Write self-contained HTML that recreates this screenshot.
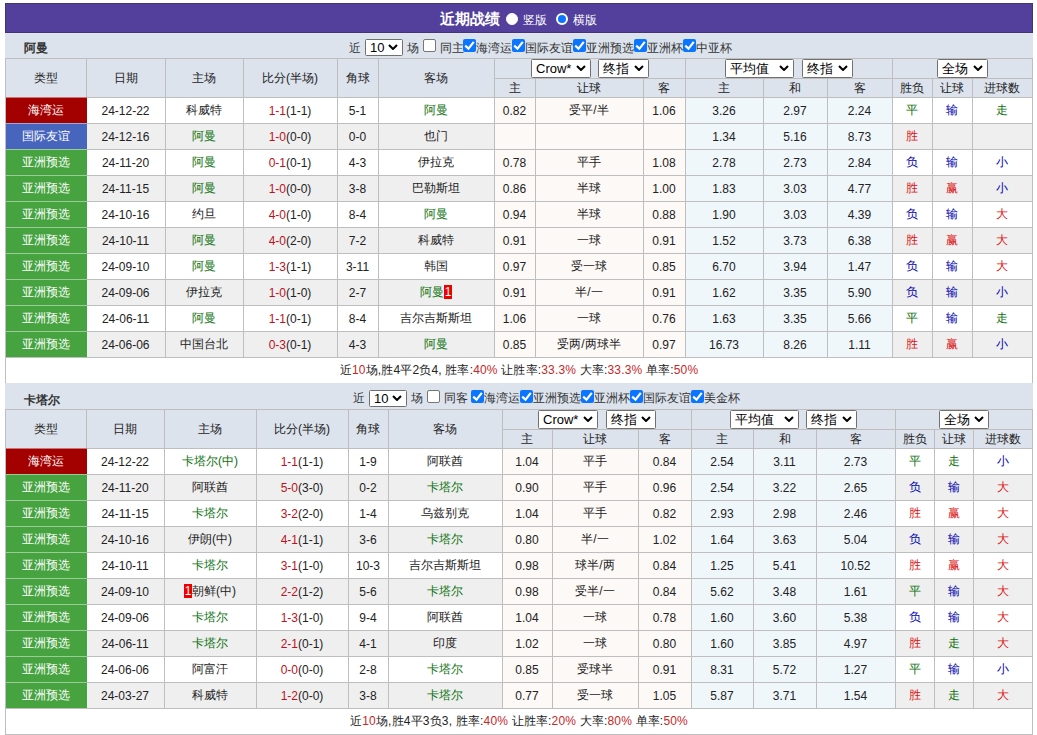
<!DOCTYPE html><html><head><meta charset="utf-8"><style>
*{margin:0;padding:0;box-sizing:content-box}
html,body{width:1037px;height:735px;overflow:hidden;background:#fff}
body{position:relative;font-family:"Liberation Sans",sans-serif;font-size:12px;color:#222}
.a{position:absolute;white-space:nowrap}
.c{position:absolute;display:flex;align-items:center;justify-content:center;white-space:nowrap}
.ttl{color:#fff;font-weight:bold;font-size:15px}
.wt{color:#fff;font-size:12px}
.rad{width:10px;height:10px;border-radius:50%;background:#fff;border:1px solid #fff}
.rad.on{background:#0a75ff;border:2px solid #fff;width:8px;height:8px}
.tn{font-weight:bold;font-size:12px;color:#333}
.ct{font-size:12px;color:#333}
.sel{position:absolute;background:#fff;border:1px solid #707070;border-radius:1.5px;font-size:13px;color:#000}
.sel span{position:absolute;left:4px;top:0;bottom:0;display:flex;align-items:center}
.cb{position:absolute;width:11px;height:11px;border:1px solid #767676;border-radius:2px;background:#fff}
.cb.on{width:13px;height:13px;border:none;background:#0a75ff}
.cb svg{position:absolute;left:0;top:0}
.card{display:inline-block;background:#e00;color:#fff;width:8px;height:14px;line-height:14px;text-align:center;font-size:12px}
</style></head><body><div class="a" style="left:5px;top:3px;width:1026px;height:28px;background:#52409c;border:1px solid #403670;"></div>
<div class="a ttl" style="left:440px;top:3px;width:60px;text-align:center;height:30px;line-height:31px;">近期战绩</div>
<div class="a rad" style="left:506px;top:13px;"></div>
<div class="a wt" style="left:523px;top:4px;width:24px;text-align:center;height:30px;line-height:32px;">竖版</div>
<div class="a rad on" style="left:556px;top:13px;"></div>
<div class="a wt" style="left:573px;top:4px;width:24px;text-align:center;height:30px;line-height:32px;">横版</div>
<div class="a" style="left:5px;top:33px;width:1028px;height:25px;background:#dce3ed;"></div>
<div class="a tn" style="left:24px;top:33px;height:25px;line-height:30px;">阿曼</div>
<div class="a ct" style="left:349px;top:34px;width:12px;text-align:center;line-height:29px;">近</div>
<div class="sel" style="left:365px;top:39px;width:36px;height:15px;"><span>10</span><svg width="10" height="6" viewBox="0 0 10 6" style="position:absolute;right:4px;top:4px"><path d="M1 1 L5 5 L9 1" fill="none" stroke="#000" stroke-width="2"/></svg></div>
<div class="a ct" style="left:407px;top:34px;width:12px;text-align:center;line-height:29px;">场</div>
<div class="cb" style="left:423px;top:39px;"></div>
<div class="a ct" style="left:440px;top:34px;width:24px;text-align:center;line-height:29px;">同主</div>
<div class="cb on" style="left:463px;top:39px;"><svg width="13" height="13" viewBox="0 0 13 13"><path d="M2.2 6.6 L5.5 9.6 L10.8 2.9" fill="none" stroke="#fff" stroke-width="2.2"/></svg></div>
<div class="a ct" style="left:476px;top:34px;width:36px;text-align:center;line-height:29px;">海湾运</div>
<div class="cb on" style="left:512px;top:39px;"><svg width="13" height="13" viewBox="0 0 13 13"><path d="M2.2 6.6 L5.5 9.6 L10.8 2.9" fill="none" stroke="#fff" stroke-width="2.2"/></svg></div>
<div class="a ct" style="left:525px;top:34px;width:48px;text-align:center;line-height:29px;">国际友谊</div>
<div class="cb on" style="left:573px;top:39px;"><svg width="13" height="13" viewBox="0 0 13 13"><path d="M2.2 6.6 L5.5 9.6 L10.8 2.9" fill="none" stroke="#fff" stroke-width="2.2"/></svg></div>
<div class="a ct" style="left:586px;top:34px;width:48px;text-align:center;line-height:29px;">亚洲预选</div>
<div class="cb on" style="left:634px;top:39px;"><svg width="13" height="13" viewBox="0 0 13 13"><path d="M2.2 6.6 L5.5 9.6 L10.8 2.9" fill="none" stroke="#fff" stroke-width="2.2"/></svg></div>
<div class="a ct" style="left:647px;top:34px;width:36px;text-align:center;line-height:29px;">亚洲杯</div>
<div class="cb on" style="left:683px;top:39px;"><svg width="13" height="13" viewBox="0 0 13 13"><path d="M2.2 6.6 L5.5 9.6 L10.8 2.9" fill="none" stroke="#fff" stroke-width="2.2"/></svg></div>
<div class="a ct" style="left:696px;top:34px;width:36px;text-align:center;line-height:29px;">中亚杯</div>
<div class="a" style="left:5px;top:58px;width:1028px;height:39px;background:#dce3ed;"></div>
<div class="a" style="left:5px;top:97px;width:1028px;height:26px;background:#ffffff;"></div>
<div class="a" style="left:494px;top:97px;width:191px;height:26px;background:#fdf9f6;"></div>
<div class="a" style="left:685px;top:97px;width:207px;height:26px;background:#f0f7fb;"></div>
<div class="a" style="left:5px;top:123px;width:1028px;height:26px;background:#efefef;"></div>
<div class="a" style="left:494px;top:123px;width:191px;height:26px;background:#fdf9f6;"></div>
<div class="a" style="left:685px;top:123px;width:207px;height:26px;background:#f0f7fb;"></div>
<div class="a" style="left:5px;top:149px;width:1028px;height:26px;background:#ffffff;"></div>
<div class="a" style="left:494px;top:149px;width:191px;height:26px;background:#fdf9f6;"></div>
<div class="a" style="left:685px;top:149px;width:207px;height:26px;background:#f0f7fb;"></div>
<div class="a" style="left:5px;top:175px;width:1028px;height:26px;background:#efefef;"></div>
<div class="a" style="left:494px;top:175px;width:191px;height:26px;background:#fdf9f6;"></div>
<div class="a" style="left:685px;top:175px;width:207px;height:26px;background:#f0f7fb;"></div>
<div class="a" style="left:5px;top:201px;width:1028px;height:26px;background:#ffffff;"></div>
<div class="a" style="left:494px;top:201px;width:191px;height:26px;background:#fdf9f6;"></div>
<div class="a" style="left:685px;top:201px;width:207px;height:26px;background:#f0f7fb;"></div>
<div class="a" style="left:5px;top:227px;width:1028px;height:26px;background:#efefef;"></div>
<div class="a" style="left:494px;top:227px;width:191px;height:26px;background:#fdf9f6;"></div>
<div class="a" style="left:685px;top:227px;width:207px;height:26px;background:#f0f7fb;"></div>
<div class="a" style="left:5px;top:253px;width:1028px;height:26px;background:#ffffff;"></div>
<div class="a" style="left:494px;top:253px;width:191px;height:26px;background:#fdf9f6;"></div>
<div class="a" style="left:685px;top:253px;width:207px;height:26px;background:#f0f7fb;"></div>
<div class="a" style="left:5px;top:279px;width:1028px;height:26px;background:#efefef;"></div>
<div class="a" style="left:494px;top:279px;width:191px;height:26px;background:#fdf9f6;"></div>
<div class="a" style="left:685px;top:279px;width:207px;height:26px;background:#f0f7fb;"></div>
<div class="a" style="left:5px;top:305px;width:1028px;height:26px;background:#ffffff;"></div>
<div class="a" style="left:494px;top:305px;width:191px;height:26px;background:#fdf9f6;"></div>
<div class="a" style="left:685px;top:305px;width:207px;height:26px;background:#f0f7fb;"></div>
<div class="a" style="left:5px;top:331px;width:1028px;height:26px;background:#efefef;"></div>
<div class="a" style="left:494px;top:331px;width:191px;height:26px;background:#fdf9f6;"></div>
<div class="a" style="left:685px;top:331px;width:207px;height:26px;background:#f0f7fb;"></div>
<div class="a" style="left:5px;top:357px;width:1028px;height:26px;background:#ffffff;"></div>
<div class="a" style="left:5px;top:58px;width:1028px;height:1px;background:#bebebe;"></div>
<div class="a" style="left:494px;top:78px;width:539px;height:1px;background:#bebebe;"></div>
<div class="a" style="left:5px;top:97px;width:1028px;height:1px;background:#bebebe;"></div>
<div class="a" style="left:5px;top:123px;width:1028px;height:1px;background:#bebebe;"></div>
<div class="a" style="left:5px;top:149px;width:1028px;height:1px;background:#bebebe;"></div>
<div class="a" style="left:5px;top:175px;width:1028px;height:1px;background:#bebebe;"></div>
<div class="a" style="left:5px;top:201px;width:1028px;height:1px;background:#bebebe;"></div>
<div class="a" style="left:5px;top:227px;width:1028px;height:1px;background:#bebebe;"></div>
<div class="a" style="left:5px;top:253px;width:1028px;height:1px;background:#bebebe;"></div>
<div class="a" style="left:5px;top:279px;width:1028px;height:1px;background:#bebebe;"></div>
<div class="a" style="left:5px;top:305px;width:1028px;height:1px;background:#bebebe;"></div>
<div class="a" style="left:5px;top:331px;width:1028px;height:1px;background:#bebebe;"></div>
<div class="a" style="left:5px;top:357px;width:1028px;height:1px;background:#bebebe;"></div>
<div class="a" style="left:5px;top:383px;width:1028px;height:1px;background:#bebebe;"></div>
<div class="a" style="left:5px;top:58px;width:1px;height:326px;background:#bebebe;"></div>
<div class="a" style="left:1032px;top:58px;width:1px;height:326px;background:#bebebe;"></div>
<div class="a" style="left:86px;top:58px;width:1px;height:299px;background:#bebebe;"></div>
<div class="a" style="left:165px;top:58px;width:1px;height:299px;background:#bebebe;"></div>
<div class="a" style="left:243px;top:58px;width:1px;height:299px;background:#bebebe;"></div>
<div class="a" style="left:337px;top:58px;width:1px;height:299px;background:#bebebe;"></div>
<div class="a" style="left:378px;top:58px;width:1px;height:299px;background:#bebebe;"></div>
<div class="a" style="left:494px;top:58px;width:1px;height:299px;background:#bebebe;"></div>
<div class="a" style="left:535px;top:78px;width:1px;height:279px;background:#bebebe;"></div>
<div class="a" style="left:643px;top:78px;width:1px;height:279px;background:#bebebe;"></div>
<div class="a" style="left:685px;top:58px;width:1px;height:299px;background:#bebebe;"></div>
<div class="a" style="left:763px;top:78px;width:1px;height:279px;background:#bebebe;"></div>
<div class="a" style="left:827px;top:78px;width:1px;height:279px;background:#bebebe;"></div>
<div class="a" style="left:892px;top:58px;width:1px;height:299px;background:#bebebe;"></div>
<div class="a" style="left:932px;top:78px;width:1px;height:279px;background:#bebebe;"></div>
<div class="a" style="left:972px;top:78px;width:1px;height:279px;background:#bebebe;"></div>
<div class="c" style="left:5px;top:58px;width:81px;height:40px;"><span>类型</span></div>
<div class="c" style="left:86px;top:58px;width:79px;height:40px;"><span>日期</span></div>
<div class="c" style="left:165px;top:58px;width:78px;height:40px;"><span>主场</span></div>
<div class="c" style="left:243px;top:58px;width:94px;height:40px;"><span>比分(半场)</span></div>
<div class="c" style="left:337px;top:58px;width:41px;height:40px;"><span>角球</span></div>
<div class="c" style="left:378px;top:58px;width:116px;height:40px;"><span>客场</span></div>
<div class="c" style="left:494px;top:78px;width:41px;height:20px;"><span>主</span></div>
<div class="c" style="left:535px;top:78px;width:108px;height:20px;"><span>让球</span></div>
<div class="c" style="left:643px;top:78px;width:42px;height:20px;"><span>客</span></div>
<div class="c" style="left:685px;top:78px;width:78px;height:20px;"><span>主</span></div>
<div class="c" style="left:763px;top:78px;width:64px;height:20px;"><span>和</span></div>
<div class="c" style="left:827px;top:78px;width:65px;height:20px;"><span>客</span></div>
<div class="c" style="left:892px;top:78px;width:40px;height:20px;"><span>胜负</span></div>
<div class="c" style="left:932px;top:78px;width:40px;height:20px;"><span>让球</span></div>
<div class="c" style="left:972px;top:78px;width:60px;height:20px;"><span>进球数</span></div>
<div class="a" style="left:6px;top:97px;width:81px;height:26px;background:#a30000;"></div>
<div class="a" style="left:6px;top:97px;width:81px;height:1px;background:rgba(255,255,255,0.45);"></div>
<div class="c" style="left:5px;top:97px;width:81px;height:27px;color:#ffffff;"><span>海湾运</span></div>
<div class="c" style="left:86px;top:97px;width:79px;height:27px;"><span>24-12-22</span></div>
<div class="c" style="left:165px;top:97px;width:78px;height:27px;"><span>科威特</span></div>
<div class="c" style="left:243px;top:97px;width:94px;height:27px;"><span><span style="color:#bb1122">1-1</span>(1-1)</span></div>
<div class="c" style="left:337px;top:97px;width:41px;height:27px;"><span>5-1</span></div>
<div class="c" style="left:378px;top:97px;width:116px;height:27px;color:#0b700b;"><span>阿曼</span></div>
<div class="c" style="left:494px;top:97px;width:41px;height:27px;"><span>0.82</span></div>
<div class="c" style="left:535px;top:97px;width:108px;height:27px;"><span>受平/半</span></div>
<div class="c" style="left:643px;top:97px;width:42px;height:27px;"><span>1.06</span></div>
<div class="c" style="left:685px;top:97px;width:78px;height:27px;"><span>3.26</span></div>
<div class="c" style="left:763px;top:97px;width:64px;height:27px;"><span>2.97</span></div>
<div class="c" style="left:827px;top:97px;width:65px;height:27px;"><span>2.24</span></div>
<div class="c" style="left:892px;top:97px;width:40px;height:27px;color:#0b700b;"><span>平</span></div>
<div class="c" style="left:932px;top:97px;width:40px;height:27px;color:#0000b0;"><span>输</span></div>
<div class="c" style="left:972px;top:97px;width:60px;height:27px;color:#0b700b;"><span>走</span></div>
<div class="a" style="left:6px;top:123px;width:81px;height:26px;background:#4765bd;"></div>
<div class="a" style="left:6px;top:123px;width:81px;height:1px;background:rgba(255,255,255,0.45);"></div>
<div class="c" style="left:5px;top:123px;width:81px;height:27px;color:#ffffff;"><span>国际友谊</span></div>
<div class="c" style="left:86px;top:123px;width:79px;height:27px;"><span>24-12-16</span></div>
<div class="c" style="left:165px;top:123px;width:78px;height:27px;color:#0b700b;"><span>阿曼</span></div>
<div class="c" style="left:243px;top:123px;width:94px;height:27px;"><span><span style="color:#bb1122">1-0</span>(0-0)</span></div>
<div class="c" style="left:337px;top:123px;width:41px;height:27px;"><span>0-0</span></div>
<div class="c" style="left:378px;top:123px;width:116px;height:27px;"><span>也门</span></div>
<div class="c" style="left:494px;top:123px;width:41px;height:27px;"><span></span></div>
<div class="c" style="left:535px;top:123px;width:108px;height:27px;"><span></span></div>
<div class="c" style="left:643px;top:123px;width:42px;height:27px;"><span></span></div>
<div class="c" style="left:685px;top:123px;width:78px;height:27px;"><span>1.34</span></div>
<div class="c" style="left:763px;top:123px;width:64px;height:27px;"><span>5.16</span></div>
<div class="c" style="left:827px;top:123px;width:65px;height:27px;"><span>8.73</span></div>
<div class="c" style="left:892px;top:123px;width:40px;height:27px;color:#dd1111;"><span>胜</span></div>
<div class="c" style="left:932px;top:123px;width:40px;height:27px;"><span></span></div>
<div class="c" style="left:972px;top:123px;width:60px;height:27px;"><span></span></div>
<div class="a" style="left:6px;top:149px;width:81px;height:26px;background:#46a340;"></div>
<div class="a" style="left:6px;top:149px;width:81px;height:1px;background:rgba(255,255,255,0.45);"></div>
<div class="c" style="left:5px;top:149px;width:81px;height:27px;color:#ffffff;"><span>亚洲预选</span></div>
<div class="c" style="left:86px;top:149px;width:79px;height:27px;"><span>24-11-20</span></div>
<div class="c" style="left:165px;top:149px;width:78px;height:27px;color:#0b700b;"><span>阿曼</span></div>
<div class="c" style="left:243px;top:149px;width:94px;height:27px;"><span><span style="color:#bb1122">0-1</span>(0-1)</span></div>
<div class="c" style="left:337px;top:149px;width:41px;height:27px;"><span>4-3</span></div>
<div class="c" style="left:378px;top:149px;width:116px;height:27px;"><span>伊拉克</span></div>
<div class="c" style="left:494px;top:149px;width:41px;height:27px;"><span>0.78</span></div>
<div class="c" style="left:535px;top:149px;width:108px;height:27px;"><span>平手</span></div>
<div class="c" style="left:643px;top:149px;width:42px;height:27px;"><span>1.08</span></div>
<div class="c" style="left:685px;top:149px;width:78px;height:27px;"><span>2.78</span></div>
<div class="c" style="left:763px;top:149px;width:64px;height:27px;"><span>2.73</span></div>
<div class="c" style="left:827px;top:149px;width:65px;height:27px;"><span>2.84</span></div>
<div class="c" style="left:892px;top:149px;width:40px;height:27px;color:#0000b0;"><span>负</span></div>
<div class="c" style="left:932px;top:149px;width:40px;height:27px;color:#0000b0;"><span>输</span></div>
<div class="c" style="left:972px;top:149px;width:60px;height:27px;color:#0000b0;"><span>小</span></div>
<div class="a" style="left:6px;top:175px;width:81px;height:26px;background:#46a340;"></div>
<div class="a" style="left:6px;top:175px;width:81px;height:1px;background:rgba(255,255,255,0.45);"></div>
<div class="c" style="left:5px;top:175px;width:81px;height:27px;color:#ffffff;"><span>亚洲预选</span></div>
<div class="c" style="left:86px;top:175px;width:79px;height:27px;"><span>24-11-15</span></div>
<div class="c" style="left:165px;top:175px;width:78px;height:27px;color:#0b700b;"><span>阿曼</span></div>
<div class="c" style="left:243px;top:175px;width:94px;height:27px;"><span><span style="color:#bb1122">1-0</span>(0-0)</span></div>
<div class="c" style="left:337px;top:175px;width:41px;height:27px;"><span>3-8</span></div>
<div class="c" style="left:378px;top:175px;width:116px;height:27px;"><span>巴勒斯坦</span></div>
<div class="c" style="left:494px;top:175px;width:41px;height:27px;"><span>0.86</span></div>
<div class="c" style="left:535px;top:175px;width:108px;height:27px;"><span>半球</span></div>
<div class="c" style="left:643px;top:175px;width:42px;height:27px;"><span>1.00</span></div>
<div class="c" style="left:685px;top:175px;width:78px;height:27px;"><span>1.83</span></div>
<div class="c" style="left:763px;top:175px;width:64px;height:27px;"><span>3.03</span></div>
<div class="c" style="left:827px;top:175px;width:65px;height:27px;"><span>4.77</span></div>
<div class="c" style="left:892px;top:175px;width:40px;height:27px;color:#dd1111;"><span>胜</span></div>
<div class="c" style="left:932px;top:175px;width:40px;height:27px;color:#dd1111;"><span>赢</span></div>
<div class="c" style="left:972px;top:175px;width:60px;height:27px;color:#0000b0;"><span>小</span></div>
<div class="a" style="left:6px;top:201px;width:81px;height:26px;background:#46a340;"></div>
<div class="a" style="left:6px;top:201px;width:81px;height:1px;background:rgba(255,255,255,0.45);"></div>
<div class="c" style="left:5px;top:201px;width:81px;height:27px;color:#ffffff;"><span>亚洲预选</span></div>
<div class="c" style="left:86px;top:201px;width:79px;height:27px;"><span>24-10-16</span></div>
<div class="c" style="left:165px;top:201px;width:78px;height:27px;"><span>约旦</span></div>
<div class="c" style="left:243px;top:201px;width:94px;height:27px;"><span><span style="color:#bb1122">4-0</span>(1-0)</span></div>
<div class="c" style="left:337px;top:201px;width:41px;height:27px;"><span>8-4</span></div>
<div class="c" style="left:378px;top:201px;width:116px;height:27px;color:#0b700b;"><span>阿曼</span></div>
<div class="c" style="left:494px;top:201px;width:41px;height:27px;"><span>0.94</span></div>
<div class="c" style="left:535px;top:201px;width:108px;height:27px;"><span>半球</span></div>
<div class="c" style="left:643px;top:201px;width:42px;height:27px;"><span>0.88</span></div>
<div class="c" style="left:685px;top:201px;width:78px;height:27px;"><span>1.90</span></div>
<div class="c" style="left:763px;top:201px;width:64px;height:27px;"><span>3.03</span></div>
<div class="c" style="left:827px;top:201px;width:65px;height:27px;"><span>4.39</span></div>
<div class="c" style="left:892px;top:201px;width:40px;height:27px;color:#0000b0;"><span>负</span></div>
<div class="c" style="left:932px;top:201px;width:40px;height:27px;color:#0000b0;"><span>输</span></div>
<div class="c" style="left:972px;top:201px;width:60px;height:27px;color:#dd1111;"><span>大</span></div>
<div class="a" style="left:6px;top:227px;width:81px;height:26px;background:#46a340;"></div>
<div class="a" style="left:6px;top:227px;width:81px;height:1px;background:rgba(255,255,255,0.45);"></div>
<div class="c" style="left:5px;top:227px;width:81px;height:27px;color:#ffffff;"><span>亚洲预选</span></div>
<div class="c" style="left:86px;top:227px;width:79px;height:27px;"><span>24-10-11</span></div>
<div class="c" style="left:165px;top:227px;width:78px;height:27px;color:#0b700b;"><span>阿曼</span></div>
<div class="c" style="left:243px;top:227px;width:94px;height:27px;"><span><span style="color:#bb1122">4-0</span>(2-0)</span></div>
<div class="c" style="left:337px;top:227px;width:41px;height:27px;"><span>7-2</span></div>
<div class="c" style="left:378px;top:227px;width:116px;height:27px;"><span>科威特</span></div>
<div class="c" style="left:494px;top:227px;width:41px;height:27px;"><span>0.91</span></div>
<div class="c" style="left:535px;top:227px;width:108px;height:27px;"><span>一球</span></div>
<div class="c" style="left:643px;top:227px;width:42px;height:27px;"><span>0.91</span></div>
<div class="c" style="left:685px;top:227px;width:78px;height:27px;"><span>1.52</span></div>
<div class="c" style="left:763px;top:227px;width:64px;height:27px;"><span>3.73</span></div>
<div class="c" style="left:827px;top:227px;width:65px;height:27px;"><span>6.38</span></div>
<div class="c" style="left:892px;top:227px;width:40px;height:27px;color:#dd1111;"><span>胜</span></div>
<div class="c" style="left:932px;top:227px;width:40px;height:27px;color:#dd1111;"><span>赢</span></div>
<div class="c" style="left:972px;top:227px;width:60px;height:27px;color:#dd1111;"><span>大</span></div>
<div class="a" style="left:6px;top:253px;width:81px;height:26px;background:#46a340;"></div>
<div class="a" style="left:6px;top:253px;width:81px;height:1px;background:rgba(255,255,255,0.45);"></div>
<div class="c" style="left:5px;top:253px;width:81px;height:27px;color:#ffffff;"><span>亚洲预选</span></div>
<div class="c" style="left:86px;top:253px;width:79px;height:27px;"><span>24-09-10</span></div>
<div class="c" style="left:165px;top:253px;width:78px;height:27px;color:#0b700b;"><span>阿曼</span></div>
<div class="c" style="left:243px;top:253px;width:94px;height:27px;"><span><span style="color:#bb1122">1-3</span>(1-1)</span></div>
<div class="c" style="left:337px;top:253px;width:41px;height:27px;"><span>3-11</span></div>
<div class="c" style="left:378px;top:253px;width:116px;height:27px;"><span>韩国</span></div>
<div class="c" style="left:494px;top:253px;width:41px;height:27px;"><span>0.97</span></div>
<div class="c" style="left:535px;top:253px;width:108px;height:27px;"><span>受一球</span></div>
<div class="c" style="left:643px;top:253px;width:42px;height:27px;"><span>0.85</span></div>
<div class="c" style="left:685px;top:253px;width:78px;height:27px;"><span>6.70</span></div>
<div class="c" style="left:763px;top:253px;width:64px;height:27px;"><span>3.94</span></div>
<div class="c" style="left:827px;top:253px;width:65px;height:27px;"><span>1.47</span></div>
<div class="c" style="left:892px;top:253px;width:40px;height:27px;color:#0000b0;"><span>负</span></div>
<div class="c" style="left:932px;top:253px;width:40px;height:27px;color:#0000b0;"><span>输</span></div>
<div class="c" style="left:972px;top:253px;width:60px;height:27px;color:#dd1111;"><span>大</span></div>
<div class="a" style="left:6px;top:279px;width:81px;height:26px;background:#46a340;"></div>
<div class="a" style="left:6px;top:279px;width:81px;height:1px;background:rgba(255,255,255,0.45);"></div>
<div class="c" style="left:5px;top:279px;width:81px;height:27px;color:#ffffff;"><span>亚洲预选</span></div>
<div class="c" style="left:86px;top:279px;width:79px;height:27px;"><span>24-09-06</span></div>
<div class="c" style="left:165px;top:279px;width:78px;height:27px;"><span>伊拉克</span></div>
<div class="c" style="left:243px;top:279px;width:94px;height:27px;"><span><span style="color:#bb1122">1-0</span>(1-0)</span></div>
<div class="c" style="left:337px;top:279px;width:41px;height:27px;"><span>2-7</span></div>
<div class="c" style="left:378px;top:279px;width:116px;height:27px;color:#0b700b;"><span>阿曼<span class="card">1</span></span></div>
<div class="c" style="left:494px;top:279px;width:41px;height:27px;"><span>0.91</span></div>
<div class="c" style="left:535px;top:279px;width:108px;height:27px;"><span>半/一</span></div>
<div class="c" style="left:643px;top:279px;width:42px;height:27px;"><span>0.91</span></div>
<div class="c" style="left:685px;top:279px;width:78px;height:27px;"><span>1.62</span></div>
<div class="c" style="left:763px;top:279px;width:64px;height:27px;"><span>3.35</span></div>
<div class="c" style="left:827px;top:279px;width:65px;height:27px;"><span>5.90</span></div>
<div class="c" style="left:892px;top:279px;width:40px;height:27px;color:#0000b0;"><span>负</span></div>
<div class="c" style="left:932px;top:279px;width:40px;height:27px;color:#0000b0;"><span>输</span></div>
<div class="c" style="left:972px;top:279px;width:60px;height:27px;color:#0000b0;"><span>小</span></div>
<div class="a" style="left:6px;top:305px;width:81px;height:26px;background:#46a340;"></div>
<div class="a" style="left:6px;top:305px;width:81px;height:1px;background:rgba(255,255,255,0.45);"></div>
<div class="c" style="left:5px;top:305px;width:81px;height:27px;color:#ffffff;"><span>亚洲预选</span></div>
<div class="c" style="left:86px;top:305px;width:79px;height:27px;"><span>24-06-11</span></div>
<div class="c" style="left:165px;top:305px;width:78px;height:27px;color:#0b700b;"><span>阿曼</span></div>
<div class="c" style="left:243px;top:305px;width:94px;height:27px;"><span><span style="color:#bb1122">1-1</span>(0-1)</span></div>
<div class="c" style="left:337px;top:305px;width:41px;height:27px;"><span>8-4</span></div>
<div class="c" style="left:378px;top:305px;width:116px;height:27px;"><span>吉尔吉斯斯坦</span></div>
<div class="c" style="left:494px;top:305px;width:41px;height:27px;"><span>1.06</span></div>
<div class="c" style="left:535px;top:305px;width:108px;height:27px;"><span>一球</span></div>
<div class="c" style="left:643px;top:305px;width:42px;height:27px;"><span>0.76</span></div>
<div class="c" style="left:685px;top:305px;width:78px;height:27px;"><span>1.63</span></div>
<div class="c" style="left:763px;top:305px;width:64px;height:27px;"><span>3.35</span></div>
<div class="c" style="left:827px;top:305px;width:65px;height:27px;"><span>5.66</span></div>
<div class="c" style="left:892px;top:305px;width:40px;height:27px;color:#0b700b;"><span>平</span></div>
<div class="c" style="left:932px;top:305px;width:40px;height:27px;color:#0000b0;"><span>输</span></div>
<div class="c" style="left:972px;top:305px;width:60px;height:27px;color:#0b700b;"><span>走</span></div>
<div class="a" style="left:6px;top:331px;width:81px;height:26px;background:#46a340;"></div>
<div class="a" style="left:6px;top:331px;width:81px;height:1px;background:rgba(255,255,255,0.45);"></div>
<div class="c" style="left:5px;top:331px;width:81px;height:27px;color:#ffffff;"><span>亚洲预选</span></div>
<div class="c" style="left:86px;top:331px;width:79px;height:27px;"><span>24-06-06</span></div>
<div class="c" style="left:165px;top:331px;width:78px;height:27px;"><span>中国台北</span></div>
<div class="c" style="left:243px;top:331px;width:94px;height:27px;"><span><span style="color:#bb1122">0-3</span>(0-1)</span></div>
<div class="c" style="left:337px;top:331px;width:41px;height:27px;"><span>4-3</span></div>
<div class="c" style="left:378px;top:331px;width:116px;height:27px;color:#0b700b;"><span>阿曼</span></div>
<div class="c" style="left:494px;top:331px;width:41px;height:27px;"><span>0.85</span></div>
<div class="c" style="left:535px;top:331px;width:108px;height:27px;"><span>受两/两球半</span></div>
<div class="c" style="left:643px;top:331px;width:42px;height:27px;"><span>0.97</span></div>
<div class="c" style="left:685px;top:331px;width:78px;height:27px;"><span>16.73</span></div>
<div class="c" style="left:763px;top:331px;width:64px;height:27px;"><span>8.26</span></div>
<div class="c" style="left:827px;top:331px;width:65px;height:27px;"><span>1.11</span></div>
<div class="c" style="left:892px;top:331px;width:40px;height:27px;color:#dd1111;"><span>胜</span></div>
<div class="c" style="left:932px;top:331px;width:40px;height:27px;color:#dd1111;"><span>赢</span></div>
<div class="c" style="left:972px;top:331px;width:60px;height:27px;color:#0000b0;"><span>小</span></div>
<div class="c" style="left:5px;top:357px;width:1028px;height:27px;letter-spacing:0.17px;"><span>近<span style="color:#c62828">10</span>场,胜4平2负4, 胜率:<span style="color:#c62828">40%</span> 让胜率:<span style="color:#c62828">33.3%</span> 大率:<span style="color:#c62828">33.3%</span> 单率:<span style="color:#c62828">50%</span></span></div>
<div class="sel" style="left:531px;top:59px;width:58px;height:17px;"><span>Crow*</span><svg width="10" height="6" viewBox="0 0 10 6" style="position:absolute;right:4px;top:5px"><path d="M1 1 L5 5 L9 1" fill="none" stroke="#000" stroke-width="2"/></svg></div>
<div class="sel" style="left:598px;top:59px;width:49px;height:17px;"><span>终指</span><svg width="10" height="6" viewBox="0 0 10 6" style="position:absolute;right:4px;top:5px"><path d="M1 1 L5 5 L9 1" fill="none" stroke="#000" stroke-width="2"/></svg></div>
<div class="sel" style="left:725px;top:59px;width:67px;height:17px;"><span>平均值</span><svg width="10" height="6" viewBox="0 0 10 6" style="position:absolute;right:4px;top:5px"><path d="M1 1 L5 5 L9 1" fill="none" stroke="#000" stroke-width="2"/></svg></div>
<div class="sel" style="left:802px;top:59px;width:49px;height:17px;"><span>终指</span><svg width="10" height="6" viewBox="0 0 10 6" style="position:absolute;right:4px;top:5px"><path d="M1 1 L5 5 L9 1" fill="none" stroke="#000" stroke-width="2"/></svg></div>
<div class="sel" style="left:937px;top:59px;width:49px;height:17px;"><span>全场</span><svg width="10" height="6" viewBox="0 0 10 6" style="position:absolute;right:4px;top:5px"><path d="M1 1 L5 5 L9 1" fill="none" stroke="#000" stroke-width="2"/></svg></div>
<div class="a" style="left:5px;top:383px;width:1028px;height:26px;background:#dce3ed;"></div>
<div class="a tn" style="left:24px;top:385px;height:26px;line-height:31px;">卡塔尔</div>
<div class="a ct" style="left:353px;top:383px;width:12px;text-align:center;line-height:30px;">近</div>
<div class="sel" style="left:369px;top:390px;width:36px;height:15px;"><span>10</span><svg width="10" height="6" viewBox="0 0 10 6" style="position:absolute;right:4px;top:4px"><path d="M1 1 L5 5 L9 1" fill="none" stroke="#000" stroke-width="2"/></svg></div>
<div class="a ct" style="left:411px;top:383px;width:12px;text-align:center;line-height:30px;">场</div>
<div class="cb" style="left:427px;top:390px;"></div>
<div class="a ct" style="left:444px;top:383px;width:24px;text-align:center;line-height:30px;">同客</div>
<div class="cb on" style="left:471px;top:390px;"><svg width="13" height="13" viewBox="0 0 13 13"><path d="M2.2 6.6 L5.5 9.6 L10.8 2.9" fill="none" stroke="#fff" stroke-width="2.2"/></svg></div>
<div class="a ct" style="left:484px;top:383px;width:36px;text-align:center;line-height:30px;">海湾运</div>
<div class="cb on" style="left:520px;top:390px;"><svg width="13" height="13" viewBox="0 0 13 13"><path d="M2.2 6.6 L5.5 9.6 L10.8 2.9" fill="none" stroke="#fff" stroke-width="2.2"/></svg></div>
<div class="a ct" style="left:533px;top:383px;width:48px;text-align:center;line-height:30px;">亚洲预选</div>
<div class="cb on" style="left:581px;top:390px;"><svg width="13" height="13" viewBox="0 0 13 13"><path d="M2.2 6.6 L5.5 9.6 L10.8 2.9" fill="none" stroke="#fff" stroke-width="2.2"/></svg></div>
<div class="a ct" style="left:594px;top:383px;width:36px;text-align:center;line-height:30px;">亚洲杯</div>
<div class="cb on" style="left:630px;top:390px;"><svg width="13" height="13" viewBox="0 0 13 13"><path d="M2.2 6.6 L5.5 9.6 L10.8 2.9" fill="none" stroke="#fff" stroke-width="2.2"/></svg></div>
<div class="a ct" style="left:643px;top:383px;width:48px;text-align:center;line-height:30px;">国际友谊</div>
<div class="cb on" style="left:691px;top:390px;"><svg width="13" height="13" viewBox="0 0 13 13"><path d="M2.2 6.6 L5.5 9.6 L10.8 2.9" fill="none" stroke="#fff" stroke-width="2.2"/></svg></div>
<div class="a ct" style="left:704px;top:383px;width:36px;text-align:center;line-height:30px;">美金杯</div>
<div class="a" style="left:5px;top:409px;width:1028px;height:39px;background:#dce3ed;"></div>
<div class="a" style="left:5px;top:448px;width:1028px;height:26px;background:#ffffff;"></div>
<div class="a" style="left:502px;top:448px;width:189px;height:26px;background:#fdf9f6;"></div>
<div class="a" style="left:691px;top:448px;width:204px;height:26px;background:#f0f7fb;"></div>
<div class="a" style="left:5px;top:474px;width:1028px;height:26px;background:#efefef;"></div>
<div class="a" style="left:502px;top:474px;width:189px;height:26px;background:#fdf9f6;"></div>
<div class="a" style="left:691px;top:474px;width:204px;height:26px;background:#f0f7fb;"></div>
<div class="a" style="left:5px;top:500px;width:1028px;height:26px;background:#ffffff;"></div>
<div class="a" style="left:502px;top:500px;width:189px;height:26px;background:#fdf9f6;"></div>
<div class="a" style="left:691px;top:500px;width:204px;height:26px;background:#f0f7fb;"></div>
<div class="a" style="left:5px;top:526px;width:1028px;height:26px;background:#efefef;"></div>
<div class="a" style="left:502px;top:526px;width:189px;height:26px;background:#fdf9f6;"></div>
<div class="a" style="left:691px;top:526px;width:204px;height:26px;background:#f0f7fb;"></div>
<div class="a" style="left:5px;top:552px;width:1028px;height:26px;background:#ffffff;"></div>
<div class="a" style="left:502px;top:552px;width:189px;height:26px;background:#fdf9f6;"></div>
<div class="a" style="left:691px;top:552px;width:204px;height:26px;background:#f0f7fb;"></div>
<div class="a" style="left:5px;top:578px;width:1028px;height:26px;background:#efefef;"></div>
<div class="a" style="left:502px;top:578px;width:189px;height:26px;background:#fdf9f6;"></div>
<div class="a" style="left:691px;top:578px;width:204px;height:26px;background:#f0f7fb;"></div>
<div class="a" style="left:5px;top:604px;width:1028px;height:26px;background:#ffffff;"></div>
<div class="a" style="left:502px;top:604px;width:189px;height:26px;background:#fdf9f6;"></div>
<div class="a" style="left:691px;top:604px;width:204px;height:26px;background:#f0f7fb;"></div>
<div class="a" style="left:5px;top:630px;width:1028px;height:26px;background:#efefef;"></div>
<div class="a" style="left:502px;top:630px;width:189px;height:26px;background:#fdf9f6;"></div>
<div class="a" style="left:691px;top:630px;width:204px;height:26px;background:#f0f7fb;"></div>
<div class="a" style="left:5px;top:656px;width:1028px;height:26px;background:#ffffff;"></div>
<div class="a" style="left:502px;top:656px;width:189px;height:26px;background:#fdf9f6;"></div>
<div class="a" style="left:691px;top:656px;width:204px;height:26px;background:#f0f7fb;"></div>
<div class="a" style="left:5px;top:682px;width:1028px;height:26px;background:#efefef;"></div>
<div class="a" style="left:502px;top:682px;width:189px;height:26px;background:#fdf9f6;"></div>
<div class="a" style="left:691px;top:682px;width:204px;height:26px;background:#f0f7fb;"></div>
<div class="a" style="left:5px;top:708px;width:1028px;height:26px;background:#ffffff;"></div>
<div class="a" style="left:5px;top:409px;width:1028px;height:1px;background:#bebebe;"></div>
<div class="a" style="left:502px;top:429px;width:531px;height:1px;background:#bebebe;"></div>
<div class="a" style="left:5px;top:448px;width:1028px;height:1px;background:#bebebe;"></div>
<div class="a" style="left:5px;top:474px;width:1028px;height:1px;background:#bebebe;"></div>
<div class="a" style="left:5px;top:500px;width:1028px;height:1px;background:#bebebe;"></div>
<div class="a" style="left:5px;top:526px;width:1028px;height:1px;background:#bebebe;"></div>
<div class="a" style="left:5px;top:552px;width:1028px;height:1px;background:#bebebe;"></div>
<div class="a" style="left:5px;top:578px;width:1028px;height:1px;background:#bebebe;"></div>
<div class="a" style="left:5px;top:604px;width:1028px;height:1px;background:#bebebe;"></div>
<div class="a" style="left:5px;top:630px;width:1028px;height:1px;background:#bebebe;"></div>
<div class="a" style="left:5px;top:656px;width:1028px;height:1px;background:#bebebe;"></div>
<div class="a" style="left:5px;top:682px;width:1028px;height:1px;background:#bebebe;"></div>
<div class="a" style="left:5px;top:708px;width:1028px;height:1px;background:#bebebe;"></div>
<div class="a" style="left:5px;top:734px;width:1028px;height:1px;background:#bebebe;"></div>
<div class="a" style="left:5px;top:409px;width:1px;height:326px;background:#bebebe;"></div>
<div class="a" style="left:1032px;top:409px;width:1px;height:326px;background:#bebebe;"></div>
<div class="a" style="left:86px;top:409px;width:1px;height:299px;background:#bebebe;"></div>
<div class="a" style="left:164px;top:409px;width:1px;height:299px;background:#bebebe;"></div>
<div class="a" style="left:256px;top:409px;width:1px;height:299px;background:#bebebe;"></div>
<div class="a" style="left:348px;top:409px;width:1px;height:299px;background:#bebebe;"></div>
<div class="a" style="left:388px;top:409px;width:1px;height:299px;background:#bebebe;"></div>
<div class="a" style="left:502px;top:409px;width:1px;height:299px;background:#bebebe;"></div>
<div class="a" style="left:552px;top:429px;width:1px;height:279px;background:#bebebe;"></div>
<div class="a" style="left:638px;top:429px;width:1px;height:279px;background:#bebebe;"></div>
<div class="a" style="left:691px;top:409px;width:1px;height:299px;background:#bebebe;"></div>
<div class="a" style="left:753px;top:429px;width:1px;height:279px;background:#bebebe;"></div>
<div class="a" style="left:816px;top:429px;width:1px;height:279px;background:#bebebe;"></div>
<div class="a" style="left:895px;top:409px;width:1px;height:299px;background:#bebebe;"></div>
<div class="a" style="left:934px;top:429px;width:1px;height:279px;background:#bebebe;"></div>
<div class="a" style="left:973px;top:429px;width:1px;height:279px;background:#bebebe;"></div>
<div class="c" style="left:5px;top:409px;width:81px;height:40px;"><span>类型</span></div>
<div class="c" style="left:86px;top:409px;width:78px;height:40px;"><span>日期</span></div>
<div class="c" style="left:164px;top:409px;width:92px;height:40px;"><span>主场</span></div>
<div class="c" style="left:256px;top:409px;width:92px;height:40px;"><span>比分(半场)</span></div>
<div class="c" style="left:348px;top:409px;width:40px;height:40px;"><span>角球</span></div>
<div class="c" style="left:388px;top:409px;width:114px;height:40px;"><span>客场</span></div>
<div class="c" style="left:502px;top:429px;width:50px;height:20px;"><span>主</span></div>
<div class="c" style="left:552px;top:429px;width:86px;height:20px;"><span>让球</span></div>
<div class="c" style="left:638px;top:429px;width:53px;height:20px;"><span>客</span></div>
<div class="c" style="left:691px;top:429px;width:62px;height:20px;"><span>主</span></div>
<div class="c" style="left:753px;top:429px;width:63px;height:20px;"><span>和</span></div>
<div class="c" style="left:816px;top:429px;width:79px;height:20px;"><span>客</span></div>
<div class="c" style="left:895px;top:429px;width:39px;height:20px;"><span>胜负</span></div>
<div class="c" style="left:934px;top:429px;width:39px;height:20px;"><span>让球</span></div>
<div class="c" style="left:973px;top:429px;width:59px;height:20px;"><span>进球数</span></div>
<div class="a" style="left:6px;top:448px;width:81px;height:26px;background:#a30000;"></div>
<div class="a" style="left:6px;top:448px;width:81px;height:1px;background:rgba(255,255,255,0.45);"></div>
<div class="c" style="left:5px;top:448px;width:81px;height:27px;color:#ffffff;"><span>海湾运</span></div>
<div class="c" style="left:86px;top:448px;width:78px;height:27px;"><span>24-12-22</span></div>
<div class="c" style="left:164px;top:448px;width:92px;height:27px;color:#0b700b;"><span>卡塔尔(中)</span></div>
<div class="c" style="left:256px;top:448px;width:92px;height:27px;"><span><span style="color:#bb1122">1-1</span>(1-1)</span></div>
<div class="c" style="left:348px;top:448px;width:40px;height:27px;"><span>1-9</span></div>
<div class="c" style="left:388px;top:448px;width:114px;height:27px;"><span>阿联酋</span></div>
<div class="c" style="left:502px;top:448px;width:50px;height:27px;"><span>1.04</span></div>
<div class="c" style="left:552px;top:448px;width:86px;height:27px;"><span>平手</span></div>
<div class="c" style="left:638px;top:448px;width:53px;height:27px;"><span>0.84</span></div>
<div class="c" style="left:691px;top:448px;width:62px;height:27px;"><span>2.54</span></div>
<div class="c" style="left:753px;top:448px;width:63px;height:27px;"><span>3.11</span></div>
<div class="c" style="left:816px;top:448px;width:79px;height:27px;"><span>2.73</span></div>
<div class="c" style="left:895px;top:448px;width:39px;height:27px;color:#0b700b;"><span>平</span></div>
<div class="c" style="left:934px;top:448px;width:39px;height:27px;color:#0b700b;"><span>走</span></div>
<div class="c" style="left:973px;top:448px;width:59px;height:27px;color:#0000b0;"><span>小</span></div>
<div class="a" style="left:6px;top:474px;width:81px;height:26px;background:#46a340;"></div>
<div class="a" style="left:6px;top:474px;width:81px;height:1px;background:rgba(255,255,255,0.45);"></div>
<div class="c" style="left:5px;top:474px;width:81px;height:27px;color:#ffffff;"><span>亚洲预选</span></div>
<div class="c" style="left:86px;top:474px;width:78px;height:27px;"><span>24-11-20</span></div>
<div class="c" style="left:164px;top:474px;width:92px;height:27px;"><span>阿联酋</span></div>
<div class="c" style="left:256px;top:474px;width:92px;height:27px;"><span><span style="color:#bb1122">5-0</span>(3-0)</span></div>
<div class="c" style="left:348px;top:474px;width:40px;height:27px;"><span>0-2</span></div>
<div class="c" style="left:388px;top:474px;width:114px;height:27px;color:#0b700b;"><span>卡塔尔</span></div>
<div class="c" style="left:502px;top:474px;width:50px;height:27px;"><span>0.90</span></div>
<div class="c" style="left:552px;top:474px;width:86px;height:27px;"><span>平手</span></div>
<div class="c" style="left:638px;top:474px;width:53px;height:27px;"><span>0.96</span></div>
<div class="c" style="left:691px;top:474px;width:62px;height:27px;"><span>2.54</span></div>
<div class="c" style="left:753px;top:474px;width:63px;height:27px;"><span>3.22</span></div>
<div class="c" style="left:816px;top:474px;width:79px;height:27px;"><span>2.65</span></div>
<div class="c" style="left:895px;top:474px;width:39px;height:27px;color:#0000b0;"><span>负</span></div>
<div class="c" style="left:934px;top:474px;width:39px;height:27px;color:#0000b0;"><span>输</span></div>
<div class="c" style="left:973px;top:474px;width:59px;height:27px;color:#dd1111;"><span>大</span></div>
<div class="a" style="left:6px;top:500px;width:81px;height:26px;background:#46a340;"></div>
<div class="a" style="left:6px;top:500px;width:81px;height:1px;background:rgba(255,255,255,0.45);"></div>
<div class="c" style="left:5px;top:500px;width:81px;height:27px;color:#ffffff;"><span>亚洲预选</span></div>
<div class="c" style="left:86px;top:500px;width:78px;height:27px;"><span>24-11-15</span></div>
<div class="c" style="left:164px;top:500px;width:92px;height:27px;color:#0b700b;"><span>卡塔尔</span></div>
<div class="c" style="left:256px;top:500px;width:92px;height:27px;"><span><span style="color:#bb1122">3-2</span>(2-0)</span></div>
<div class="c" style="left:348px;top:500px;width:40px;height:27px;"><span>1-4</span></div>
<div class="c" style="left:388px;top:500px;width:114px;height:27px;"><span>乌兹别克</span></div>
<div class="c" style="left:502px;top:500px;width:50px;height:27px;"><span>1.04</span></div>
<div class="c" style="left:552px;top:500px;width:86px;height:27px;"><span>平手</span></div>
<div class="c" style="left:638px;top:500px;width:53px;height:27px;"><span>0.82</span></div>
<div class="c" style="left:691px;top:500px;width:62px;height:27px;"><span>2.93</span></div>
<div class="c" style="left:753px;top:500px;width:63px;height:27px;"><span>2.98</span></div>
<div class="c" style="left:816px;top:500px;width:79px;height:27px;"><span>2.46</span></div>
<div class="c" style="left:895px;top:500px;width:39px;height:27px;color:#dd1111;"><span>胜</span></div>
<div class="c" style="left:934px;top:500px;width:39px;height:27px;color:#dd1111;"><span>赢</span></div>
<div class="c" style="left:973px;top:500px;width:59px;height:27px;color:#dd1111;"><span>大</span></div>
<div class="a" style="left:6px;top:526px;width:81px;height:26px;background:#46a340;"></div>
<div class="a" style="left:6px;top:526px;width:81px;height:1px;background:rgba(255,255,255,0.45);"></div>
<div class="c" style="left:5px;top:526px;width:81px;height:27px;color:#ffffff;"><span>亚洲预选</span></div>
<div class="c" style="left:86px;top:526px;width:78px;height:27px;"><span>24-10-16</span></div>
<div class="c" style="left:164px;top:526px;width:92px;height:27px;"><span>伊朗(中)</span></div>
<div class="c" style="left:256px;top:526px;width:92px;height:27px;"><span><span style="color:#bb1122">4-1</span>(1-1)</span></div>
<div class="c" style="left:348px;top:526px;width:40px;height:27px;"><span>3-6</span></div>
<div class="c" style="left:388px;top:526px;width:114px;height:27px;color:#0b700b;"><span>卡塔尔</span></div>
<div class="c" style="left:502px;top:526px;width:50px;height:27px;"><span>0.80</span></div>
<div class="c" style="left:552px;top:526px;width:86px;height:27px;"><span>半/一</span></div>
<div class="c" style="left:638px;top:526px;width:53px;height:27px;"><span>1.02</span></div>
<div class="c" style="left:691px;top:526px;width:62px;height:27px;"><span>1.64</span></div>
<div class="c" style="left:753px;top:526px;width:63px;height:27px;"><span>3.63</span></div>
<div class="c" style="left:816px;top:526px;width:79px;height:27px;"><span>5.04</span></div>
<div class="c" style="left:895px;top:526px;width:39px;height:27px;color:#0000b0;"><span>负</span></div>
<div class="c" style="left:934px;top:526px;width:39px;height:27px;color:#0000b0;"><span>输</span></div>
<div class="c" style="left:973px;top:526px;width:59px;height:27px;color:#dd1111;"><span>大</span></div>
<div class="a" style="left:6px;top:552px;width:81px;height:26px;background:#46a340;"></div>
<div class="a" style="left:6px;top:552px;width:81px;height:1px;background:rgba(255,255,255,0.45);"></div>
<div class="c" style="left:5px;top:552px;width:81px;height:27px;color:#ffffff;"><span>亚洲预选</span></div>
<div class="c" style="left:86px;top:552px;width:78px;height:27px;"><span>24-10-11</span></div>
<div class="c" style="left:164px;top:552px;width:92px;height:27px;color:#0b700b;"><span>卡塔尔</span></div>
<div class="c" style="left:256px;top:552px;width:92px;height:27px;"><span><span style="color:#bb1122">3-1</span>(1-0)</span></div>
<div class="c" style="left:348px;top:552px;width:40px;height:27px;"><span>10-3</span></div>
<div class="c" style="left:388px;top:552px;width:114px;height:27px;"><span>吉尔吉斯斯坦</span></div>
<div class="c" style="left:502px;top:552px;width:50px;height:27px;"><span>0.98</span></div>
<div class="c" style="left:552px;top:552px;width:86px;height:27px;"><span>球半/两</span></div>
<div class="c" style="left:638px;top:552px;width:53px;height:27px;"><span>0.84</span></div>
<div class="c" style="left:691px;top:552px;width:62px;height:27px;"><span>1.25</span></div>
<div class="c" style="left:753px;top:552px;width:63px;height:27px;"><span>5.41</span></div>
<div class="c" style="left:816px;top:552px;width:79px;height:27px;"><span>10.52</span></div>
<div class="c" style="left:895px;top:552px;width:39px;height:27px;color:#dd1111;"><span>胜</span></div>
<div class="c" style="left:934px;top:552px;width:39px;height:27px;color:#dd1111;"><span>赢</span></div>
<div class="c" style="left:973px;top:552px;width:59px;height:27px;color:#dd1111;"><span>大</span></div>
<div class="a" style="left:6px;top:578px;width:81px;height:26px;background:#46a340;"></div>
<div class="a" style="left:6px;top:578px;width:81px;height:1px;background:rgba(255,255,255,0.45);"></div>
<div class="c" style="left:5px;top:578px;width:81px;height:27px;color:#ffffff;"><span>亚洲预选</span></div>
<div class="c" style="left:86px;top:578px;width:78px;height:27px;"><span>24-09-10</span></div>
<div class="c" style="left:164px;top:578px;width:92px;height:27px;"><span><span class="card">1</span>朝鲜(中)</span></div>
<div class="c" style="left:256px;top:578px;width:92px;height:27px;"><span><span style="color:#bb1122">2-2</span>(1-2)</span></div>
<div class="c" style="left:348px;top:578px;width:40px;height:27px;"><span>5-6</span></div>
<div class="c" style="left:388px;top:578px;width:114px;height:27px;color:#0b700b;"><span>卡塔尔</span></div>
<div class="c" style="left:502px;top:578px;width:50px;height:27px;"><span>0.98</span></div>
<div class="c" style="left:552px;top:578px;width:86px;height:27px;"><span>受半/一</span></div>
<div class="c" style="left:638px;top:578px;width:53px;height:27px;"><span>0.84</span></div>
<div class="c" style="left:691px;top:578px;width:62px;height:27px;"><span>5.62</span></div>
<div class="c" style="left:753px;top:578px;width:63px;height:27px;"><span>3.48</span></div>
<div class="c" style="left:816px;top:578px;width:79px;height:27px;"><span>1.61</span></div>
<div class="c" style="left:895px;top:578px;width:39px;height:27px;color:#0b700b;"><span>平</span></div>
<div class="c" style="left:934px;top:578px;width:39px;height:27px;color:#0000b0;"><span>输</span></div>
<div class="c" style="left:973px;top:578px;width:59px;height:27px;color:#dd1111;"><span>大</span></div>
<div class="a" style="left:6px;top:604px;width:81px;height:26px;background:#46a340;"></div>
<div class="a" style="left:6px;top:604px;width:81px;height:1px;background:rgba(255,255,255,0.45);"></div>
<div class="c" style="left:5px;top:604px;width:81px;height:27px;color:#ffffff;"><span>亚洲预选</span></div>
<div class="c" style="left:86px;top:604px;width:78px;height:27px;"><span>24-09-06</span></div>
<div class="c" style="left:164px;top:604px;width:92px;height:27px;color:#0b700b;"><span>卡塔尔</span></div>
<div class="c" style="left:256px;top:604px;width:92px;height:27px;"><span><span style="color:#bb1122">1-3</span>(1-0)</span></div>
<div class="c" style="left:348px;top:604px;width:40px;height:27px;"><span>9-4</span></div>
<div class="c" style="left:388px;top:604px;width:114px;height:27px;"><span>阿联酋</span></div>
<div class="c" style="left:502px;top:604px;width:50px;height:27px;"><span>1.04</span></div>
<div class="c" style="left:552px;top:604px;width:86px;height:27px;"><span>一球</span></div>
<div class="c" style="left:638px;top:604px;width:53px;height:27px;"><span>0.78</span></div>
<div class="c" style="left:691px;top:604px;width:62px;height:27px;"><span>1.60</span></div>
<div class="c" style="left:753px;top:604px;width:63px;height:27px;"><span>3.60</span></div>
<div class="c" style="left:816px;top:604px;width:79px;height:27px;"><span>5.38</span></div>
<div class="c" style="left:895px;top:604px;width:39px;height:27px;color:#0000b0;"><span>负</span></div>
<div class="c" style="left:934px;top:604px;width:39px;height:27px;color:#0000b0;"><span>输</span></div>
<div class="c" style="left:973px;top:604px;width:59px;height:27px;color:#dd1111;"><span>大</span></div>
<div class="a" style="left:6px;top:630px;width:81px;height:26px;background:#46a340;"></div>
<div class="a" style="left:6px;top:630px;width:81px;height:1px;background:rgba(255,255,255,0.45);"></div>
<div class="c" style="left:5px;top:630px;width:81px;height:27px;color:#ffffff;"><span>亚洲预选</span></div>
<div class="c" style="left:86px;top:630px;width:78px;height:27px;"><span>24-06-11</span></div>
<div class="c" style="left:164px;top:630px;width:92px;height:27px;color:#0b700b;"><span>卡塔尔</span></div>
<div class="c" style="left:256px;top:630px;width:92px;height:27px;"><span><span style="color:#bb1122">2-1</span>(0-1)</span></div>
<div class="c" style="left:348px;top:630px;width:40px;height:27px;"><span>4-1</span></div>
<div class="c" style="left:388px;top:630px;width:114px;height:27px;"><span>印度</span></div>
<div class="c" style="left:502px;top:630px;width:50px;height:27px;"><span>1.02</span></div>
<div class="c" style="left:552px;top:630px;width:86px;height:27px;"><span>一球</span></div>
<div class="c" style="left:638px;top:630px;width:53px;height:27px;"><span>0.80</span></div>
<div class="c" style="left:691px;top:630px;width:62px;height:27px;"><span>1.60</span></div>
<div class="c" style="left:753px;top:630px;width:63px;height:27px;"><span>3.85</span></div>
<div class="c" style="left:816px;top:630px;width:79px;height:27px;"><span>4.97</span></div>
<div class="c" style="left:895px;top:630px;width:39px;height:27px;color:#dd1111;"><span>胜</span></div>
<div class="c" style="left:934px;top:630px;width:39px;height:27px;color:#0b700b;"><span>走</span></div>
<div class="c" style="left:973px;top:630px;width:59px;height:27px;color:#dd1111;"><span>大</span></div>
<div class="a" style="left:6px;top:656px;width:81px;height:26px;background:#46a340;"></div>
<div class="a" style="left:6px;top:656px;width:81px;height:1px;background:rgba(255,255,255,0.45);"></div>
<div class="c" style="left:5px;top:656px;width:81px;height:27px;color:#ffffff;"><span>亚洲预选</span></div>
<div class="c" style="left:86px;top:656px;width:78px;height:27px;"><span>24-06-06</span></div>
<div class="c" style="left:164px;top:656px;width:92px;height:27px;"><span>阿富汗</span></div>
<div class="c" style="left:256px;top:656px;width:92px;height:27px;"><span><span style="color:#bb1122">0-0</span>(0-0)</span></div>
<div class="c" style="left:348px;top:656px;width:40px;height:27px;"><span>2-8</span></div>
<div class="c" style="left:388px;top:656px;width:114px;height:27px;color:#0b700b;"><span>卡塔尔</span></div>
<div class="c" style="left:502px;top:656px;width:50px;height:27px;"><span>0.85</span></div>
<div class="c" style="left:552px;top:656px;width:86px;height:27px;"><span>受球半</span></div>
<div class="c" style="left:638px;top:656px;width:53px;height:27px;"><span>0.91</span></div>
<div class="c" style="left:691px;top:656px;width:62px;height:27px;"><span>8.31</span></div>
<div class="c" style="left:753px;top:656px;width:63px;height:27px;"><span>5.72</span></div>
<div class="c" style="left:816px;top:656px;width:79px;height:27px;"><span>1.27</span></div>
<div class="c" style="left:895px;top:656px;width:39px;height:27px;color:#0b700b;"><span>平</span></div>
<div class="c" style="left:934px;top:656px;width:39px;height:27px;color:#0000b0;"><span>输</span></div>
<div class="c" style="left:973px;top:656px;width:59px;height:27px;color:#0000b0;"><span>小</span></div>
<div class="a" style="left:6px;top:682px;width:81px;height:26px;background:#46a340;"></div>
<div class="a" style="left:6px;top:682px;width:81px;height:1px;background:rgba(255,255,255,0.45);"></div>
<div class="c" style="left:5px;top:682px;width:81px;height:27px;color:#ffffff;"><span>亚洲预选</span></div>
<div class="c" style="left:86px;top:682px;width:78px;height:27px;"><span>24-03-27</span></div>
<div class="c" style="left:164px;top:682px;width:92px;height:27px;"><span>科威特</span></div>
<div class="c" style="left:256px;top:682px;width:92px;height:27px;"><span><span style="color:#bb1122">1-2</span>(0-0)</span></div>
<div class="c" style="left:348px;top:682px;width:40px;height:27px;"><span>3-8</span></div>
<div class="c" style="left:388px;top:682px;width:114px;height:27px;color:#0b700b;"><span>卡塔尔</span></div>
<div class="c" style="left:502px;top:682px;width:50px;height:27px;"><span>0.77</span></div>
<div class="c" style="left:552px;top:682px;width:86px;height:27px;"><span>受一球</span></div>
<div class="c" style="left:638px;top:682px;width:53px;height:27px;"><span>1.05</span></div>
<div class="c" style="left:691px;top:682px;width:62px;height:27px;"><span>5.87</span></div>
<div class="c" style="left:753px;top:682px;width:63px;height:27px;"><span>3.71</span></div>
<div class="c" style="left:816px;top:682px;width:79px;height:27px;"><span>1.54</span></div>
<div class="c" style="left:895px;top:682px;width:39px;height:27px;color:#dd1111;"><span>胜</span></div>
<div class="c" style="left:934px;top:682px;width:39px;height:27px;color:#0b700b;"><span>走</span></div>
<div class="c" style="left:973px;top:682px;width:59px;height:27px;color:#dd1111;"><span>大</span></div>
<div class="c" style="left:5px;top:708px;width:1028px;height:27px;letter-spacing:0.17px;"><span>近<span style="color:#c62828">10</span>场,胜4平3负3, 胜率:<span style="color:#c62828">40%</span> 让胜率:<span style="color:#c62828">20%</span> 大率:<span style="color:#c62828">80%</span> 单率:<span style="color:#c62828">50%</span></span></div>
<div class="sel" style="left:538px;top:410px;width:58px;height:17px;"><span>Crow*</span><svg width="10" height="6" viewBox="0 0 10 6" style="position:absolute;right:4px;top:5px"><path d="M1 1 L5 5 L9 1" fill="none" stroke="#000" stroke-width="2"/></svg></div>
<div class="sel" style="left:606px;top:410px;width:48px;height:17px;"><span>终指</span><svg width="10" height="6" viewBox="0 0 10 6" style="position:absolute;right:4px;top:5px"><path d="M1 1 L5 5 L9 1" fill="none" stroke="#000" stroke-width="2"/></svg></div>
<div class="sel" style="left:730px;top:410px;width:67px;height:17px;"><span>平均值</span><svg width="10" height="6" viewBox="0 0 10 6" style="position:absolute;right:4px;top:5px"><path d="M1 1 L5 5 L9 1" fill="none" stroke="#000" stroke-width="2"/></svg></div>
<div class="sel" style="left:806px;top:410px;width:49px;height:17px;"><span>终指</span><svg width="10" height="6" viewBox="0 0 10 6" style="position:absolute;right:4px;top:5px"><path d="M1 1 L5 5 L9 1" fill="none" stroke="#000" stroke-width="2"/></svg></div>
<div class="sel" style="left:939px;top:410px;width:48px;height:17px;"><span>全场</span><svg width="10" height="6" viewBox="0 0 10 6" style="position:absolute;right:4px;top:5px"><path d="M1 1 L5 5 L9 1" fill="none" stroke="#000" stroke-width="2"/></svg></div>
<div class="a" style="left:5px;top:33px;width:1028px;height:1px;background:#e4e2f4"></div></body></html>
